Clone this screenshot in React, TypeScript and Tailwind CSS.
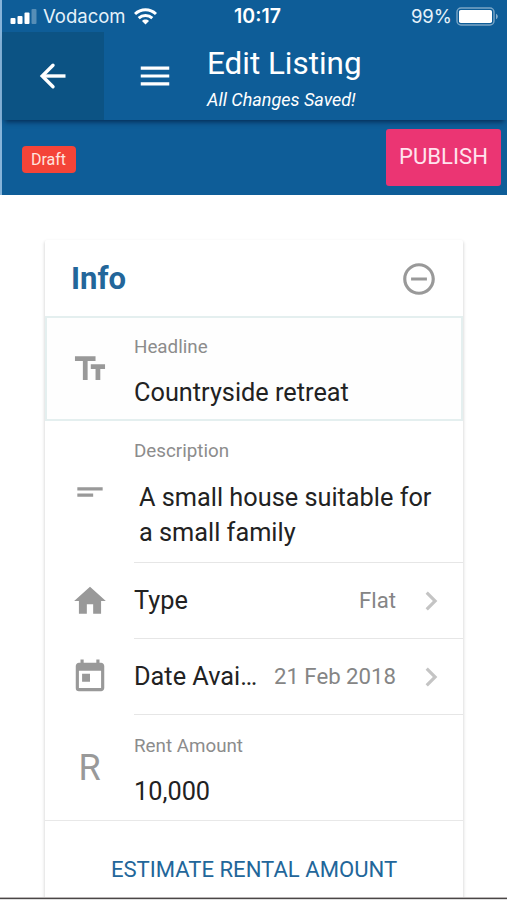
import * as React from "react";
import { clsx } from "clsx";
import {
  MdChevronRight,
  MdHome,
  MdMenu,
  MdRemoveCircleOutline,
  MdShortText,
  MdTextFields,
  MdToday,
} from "react-icons/md";

function SignalBars(): React.ReactElement {
  return (
    <svg width="27" height="17" viewBox="0 0 27 17" fill="white">
      <rect x="0.5" y="10" width="5" height="6" rx="1" />
      <rect x="7.5" y="8" width="5" height="8" rx="1" />
      <rect x="14.5" y="4.5" width="5" height="11.5" rx="1" />
      <rect x="21.5" y="1" width="5" height="15" rx="1" fillOpacity="0.3" />
    </svg>
  );
}

function WifiIcon(): React.ReactElement {
  return (
    <svg width="23" height="17" viewBox="0 0 23 17" fill="none" stroke="white" strokeWidth="3">
      <path d="M1 6C7 0.4 16 0.4 22 6" />
      <path d="M4.7 10.1C8.6 6.6 14.4 6.6 18.3 10.1" />
      <path d="M11.5 16.5L8 12.9C10 11 13 11 15 12.9Z" fill="white" stroke="none" />
    </svg>
  );
}

function BatteryIcon(): React.ReactElement {
  return (
    <svg width="43" height="19" viewBox="0 0 43 19" fill="none">
      <rect x="1" y="1" width="37" height="17" rx="4" stroke="white" strokeOpacity="0.45" strokeWidth="1.4" />
      <rect x="3" y="3" width="33" height="13" rx="1.8" fill="white" />
      <path d="M40 6.8c2.4 1 2.4 4.4 0 5.4z" fill="white" fillOpacity="0.5" />
    </svg>
  );
}

function BackArrow(): React.ReactElement {
  return (
    <svg width="28" height="28" viewBox="0 0 28 28" fill="none" stroke="white" strokeWidth="3.4">
      <path d="M14 3.2L3.2 14L14 24.8" strokeLinecap="round" />
      <path d="M3.2 14H26.5" />
    </svg>
  );
}

function StatusBar(): React.ReactElement {
  return (
    <div className="grid h-8 grid-cols-[1fr_auto_1fr] items-center pr-2 pl-2 font-['Inter',sans-serif] text-[18.5px] text-[#e6f2fa] leading-none">
      <div className="flex items-center">
        <SignalBars />
        <span className="ml-1.5 w-[84px] whitespace-nowrap">Vodacom</span>
        <span className="ml-[7px]">
          <WifiIcon />
        </span>
      </div>
      <span className="pt-0.5 pl-1.5 font-semibold text-[19.5px] text-white">10:17</span>
      <div className="flex items-center justify-end gap-1">
        <span>99%</span>
        <BatteryIcon />
      </div>
    </div>
  );
}

function Header(): React.ReactElement {
  return (
    <header className="relative flex h-[88px] shadow-[0_5px_5px_-3px_rgba(0,20,50,0.65)]">
      <button type="button" className="flex w-[102px] items-center justify-center bg-[#0c5384]">
        <BackArrow />
      </button>
      <button type="button" className="ml-8 flex items-center text-white">
        <MdMenu size={38} />
      </button>
      <div className="ml-[33px] flex flex-col pt-[13px] text-white">
        <h1 className="text-[31.4px] leading-[38px]">Edit Listing</h1>
        <p className="mt-1.5 text-[18px] italic leading-[22px]">All Changes Saved!</p>
      </div>
    </header>
  );
}

function ActionBar(): React.ReactElement {
  return (
    <div className="flex h-[75px] items-center justify-between pr-[6px] pl-5">
      <span className="mt-[3px] flex h-[27px] w-[54px] items-center justify-center rounded-[4px] bg-[#f44438] pt-0.5 pr-px text-[#ffe4df] text-[16px]">
        Draft
      </span>
      <button
        type="button"
        className="flex h-[57px] w-[115px] items-center justify-center rounded-[3px] bg-[#eb3573] pb-0.5 text-[#ffe3ee] text-[22.1px]"
      >
        PUBLISH
      </button>
    </div>
  );
}

interface RowProps {
  icon: React.ReactNode;
  children: React.ReactNode;
  className?: string;
  /** Extra classes for the part to the right of the icon */
  bodyClassName?: string;
}

function Row({ icon, children, className, bodyClassName }: RowProps): React.ReactElement {
  return (
    <div className={clsx("flex", className)}>
      <div className="flex w-[89px] shrink-0 items-center justify-center text-[#999]">{icon}</div>
      <div className={clsx("min-w-0 flex-1", bodyClassName)}>{children}</div>
    </div>
  );
}

function FieldLabel({ children }: { children: React.ReactNode }): React.ReactElement {
  return <div className="text-[#8c8c8c] text-[18.8px] leading-6">{children}</div>;
}

function SelectRow({ icon, label, value }: { icon: React.ReactNode; label: string; value: string }): React.ReactElement {
  return (
    <Row icon={icon} className="h-19" bodyClassName="flex items-center border-[#e6e6e6] border-b pt-px pr-[13px]">
      <span className="flex-1 whitespace-nowrap text-[#222] text-[25.3px]">{label}</span>
      <span className="shrink-0 text-[#858585] text-[22.2px]">{value}</span>
      <MdChevronRight size={38} className="ml-4 shrink-0 text-[#c4c4c4]" />
    </Row>
  );
}

function InfoCard(): React.ReactElement {
  return (
    <section className="mr-11 ml-[45px] flex-1 rounded-t-[2px] bg-white shadow-[0_2px_3px_1px_rgba(0,0,0,0.13)]">
      <div className="flex h-[76px] items-center justify-between pt-0.5 pr-[25px] pl-[26px]">
        <h2 className="font-bold text-[#23669a] text-[31px]">Info</h2>
        <MdRemoveCircleOutline size={38} className="text-[#999]" />
      </div>

      <Row
        icon={<MdTextFields size={38} />}
        className="h-[105px] bg-[#fefefe] shadow-[inset_0_0_0_2px_#e4efef]"
        bodyClassName="pt-[19px]"
      >
        <FieldLabel>Headline</FieldLabel>
        <div className="mt-[18px] text-[#222] text-[25.3px] leading-8">Countryside retreat</div>
      </Row>

      <Row icon={<MdShortText size={38} />} className="h-[142px]" bodyClassName="border-[#e6e6e6] border-b pt-[18px]">
        <FieldLabel>Description</FieldLabel>
        <div className="mt-[17px] pl-[5px] text-[#222] text-[25.3px] leading-[35px]">
          A small house suitable for
          <br />a small family
        </div>
      </Row>

      <SelectRow icon={<MdHome size={38} />} label="Type" value="Flat" />
      <SelectRow icon={<MdToday size={38} />} label="Date Avai…" value="21 Feb 2018" />

      <Row
        icon={<span className="text-[36px] leading-none">R</span>}
        className="h-[106px] border-[#e8e8e8] border-b"
        bodyClassName="pt-[19px]"
      >
        <FieldLabel>Rent Amount</FieldLabel>
        <div className="mt-[18px] text-[#222] text-[25.3px] leading-8">10,000</div>
      </Row>

      <button type="button" className="flex h-[76px] w-full items-center justify-center pt-[22px] text-[#22669a] text-[22.1px]">
        ESTIMATE RENTAL AMOUNT
      </button>
    </section>
  );
}

export default function App(): React.ReactElement {
  return (
    <div className="flex h-[900px] w-[507px] flex-col overflow-hidden bg-white font-['Roboto',sans-serif]">
      <div className="border-[#86b4da] border-l-2 bg-[#0e5d98]">
        <StatusBar />
        <Header />
        <ActionBar />
      </div>
      <main className="flex h-[702px] flex-col overflow-hidden pt-[45px]">
        <InfoCard />
      </main>
      <div className="h-[3px] shrink-0 border-[#b8b4b4] border-t bg-[#4a4646] shadow-[inset_0_-1px_0_#dedede]" />
    </div>
  );
}
